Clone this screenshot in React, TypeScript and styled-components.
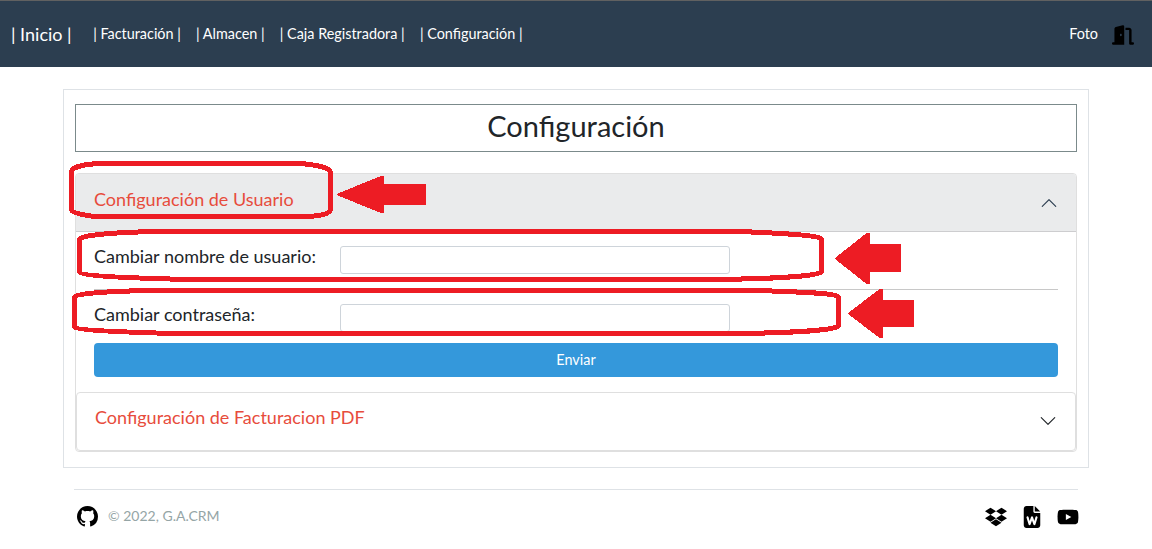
import React from 'react';
import styled, { createGlobalStyle } from 'styled-components';
import { FaDoorOpen, FaDropbox, FaFileWord, FaYoutube } from 'react-icons/fa6';
import { BsGithub } from 'react-icons/bs';

const GlobalStyle = createGlobalStyle`
  *, *::before, *::after { box-sizing: border-box; }
  body {
    margin: 0;
    background: #fff;
    color: #212529;
    font: 400 15px/22.5px Lato, "Liberation Sans", sans-serif;
  }
`;

const Page = styled.div`
  position: relative;
  height: 549px;
  overflow: hidden;
`;

const Navbar = styled.header`
  display: flex;
  align-items: center;
  height: 67px;
  padding: 1px 18px 0 11px;
  border-top: 1px solid #616161;
  background: #2c3e50;
  color: #fff;
`;

const Brand = styled.a`
  margin-right: 21.5px;
  font-size: 18px;
  white-space: nowrap;
`;

const NavLinks = styled.nav`
  display: flex;
  flex: 1;
  gap: 15.2px;
  font-size: 14.4px;
  white-space: nowrap;
`;

const UserArea = styled.div`
  display: flex;
  align-items: center;
  gap: 14px;
  font-size: 14.4px;

  svg { color: #000; }
`;

const Panel = styled.main`
  width: 1026px;
  height: 379px;
  margin: 22px 0 0 63px;
  padding: 14px 11px;
  border: 1px solid #dee2e6;
`;

const Title = styled.h1`
  height: 48px;
  margin: 0 0 21px;
  border: 1px solid #7b8a8b;
  font-size: 29px;
  font-weight: 400;
  line-height: 41px;
  text-align: center;
`;

const Accordion = styled.div`
  height: 279px;
  border: 1px solid #dfdfdf;
  border-radius: 4px;
`;

const SectionHeader = styled.button<{ $open?: boolean }>`
  display: flex;
  align-items: center;
  justify-content: space-between;
  width: 100%;
  height: ${p => (p.$open ? 58 : 59)}px;
  padding: 0 18px;
  border: ${p => (p.$open ? '0' : '1px solid #dfdfdf')};
  border-bottom: 1px solid ${p => (p.$open ? '#cdcdcf' : '#dfdfdf')};
  border-radius: ${p => (p.$open ? '3px 3px 0 0' : '4px')};
  background: ${p => (p.$open ? '#eaebec' : '#fff')};
  color: ${p => (p.$open ? '#2c3e50' : '#212529')};
  font: inherit;
`;

const SectionName = styled.span<{ $raise: number }>`
  padding-bottom: ${p => p.$raise}px;
  color: #e74c3c;
  font-size: 18px;
`;

const Chevron = styled.svg<{ $up?: boolean }>`
  width: 18px;
  height: 18px;
  margin-bottom: ${p => (p.$up ? 0 : 1)}px;
  transform: ${p => (p.$up ? 'rotate(180deg)' : 'none')};
`;

const Form = styled.form`
  display: flex;
  flex-direction: column;
  height: 160px;
  padding: 0 18px;
`;

const Field = styled.label<{ $divided?: boolean }>`
  display: grid;
  grid-template-columns: 246px 390px;
  align-items: start;
  height: ${p => (p.$divided ? 58 : 53)}px;
  padding-top: 14px;
  border-bottom: ${p => (p.$divided ? '1px solid #c8c8c8' : '0')};
  font-size: 18px;
  line-height: 20.5px;
`;

const Input = styled.input`
  height: 28px;
  border: 1px solid #ced4da;
  border-radius: 3px;
  background: #fff;
`;

const Submit = styled.button`
  height: 34px;
  padding: 0 0 2px;
  border: 0;
  border-radius: 4px;
  background: #3498db;
  color: #fff;
  font: 14.4px Lato, "Liberation Sans", sans-serif;
`;

const Footer = styled.footer`
  display: flex;
  align-items: center;
  justify-content: space-between;
  width: 1004px;
  height: 54px;
  margin: 21px 0 0 74px;
  padding: 0 0 0 3px;
  border-top: 1px solid #dee2e6;
  color: #000;
`;

const Copyright = styled.div`
  display: flex;
  align-items: center;
  gap: 10px;

  svg { margin-bottom: 1px; }
  span { color: #95a5a6; font-size: 14px; }
`;

const Social = styled.div`
  display: flex;
  align-items: center;
  gap: 14px;
  margin-right: -0.5px;
`;

const Marks = styled.svg`
  position: absolute;
  inset: 0;
  pointer-events: none;
`;

const ArrowDown = ({ up }: { up?: boolean }) => (
  <Chevron $up={up} viewBox="0 0 16 16" fill="currentColor">
    <path fillRule="evenodd" d="M1.646 4.646a.5.5 0 0 1 .708 0L8 10.293l5.646-5.647a.5.5 0 0 1 .708.708l-6 6a.5.5 0 0 1-.708 0l-6-6a.5.5 0 0 1 0-.708z" />
  </Chevron>
);

const sections = ['Facturación', 'Almacen', 'Caja Registradora', 'Configuración'];

export default function App() {
  return (
    <Page>
      <GlobalStyle />
      <Navbar>
        <Brand>| Inicio |</Brand>
        <NavLinks>
          {sections.map(name => <a key={name}>| {name} |</a>)}
        </NavLinks>
        <UserArea>
          <span>Foto</span>
          <FaDoorOpen size={22} />
        </UserArea>
      </Navbar>
      <Panel>
        <Title>Configuración</Title>
        <Accordion>
          <SectionHeader $open>
            <SectionName $raise={7}>Configuración de Usuario</SectionName>
            <ArrowDown up />
          </SectionHeader>
          <Form>
            <Field $divided>Cambiar nombre de usuario:<Input /></Field>
            <Field>Cambiar contraseña:<Input type="password" /></Field>
            <Submit type="button">Enviar</Submit>
          </Form>
          <SectionHeader>
            <SectionName $raise={9}>Configuración de Facturacion PDF</SectionName>
            <ArrowDown />
          </SectionHeader>
        </Accordion>
      </Panel>
      <Footer>
        <Copyright>
          <BsGithub size={21} />
          <span>© 2022, G.A.CRM</span>
        </Copyright>
        <Social>
          <FaDropbox size={22} />
          <FaFileWord size={22} />
          <FaYoutube size={22} />
        </Social>
      </Footer>
      <Marks width="1152" height="549" viewBox="0 0 1152 549">
        <g fill="none" stroke="#ed1c24" strokeWidth="5" strokeLinejoin="round" shapeRendering="crispEdges">
          <path d="M101 163.500H301C315 165 329 167 330.500 172V210C329 214 319 216 307 216.500H95C83 215 73 213 71.500 210V171C73 167 85 164 101 163.500Z" />
          <path d="M158 231.500H740C775 233 819 235 821.500 239V272C820 276 770 279 710 279.500H187C130 278 81 276 79.500 272V239C81 235 120 232 158 231.500Z" />
          <path d="M153 290.500H757C800 292 836 293 838.500 297V326C837 330 790 333 735 333.500H173C120 332 76 330 74.500 327V297C77 293 115 291 153 290.500Z" />
        </g>
        <g fill="#ed1c24" stroke="#ed1c24" strokeWidth="2" strokeLinejoin="round" shapeRendering="crispEdges">
          <path d="M338 194.500L381 177H383V185H425V204H383V212H381Z" />
          <path d="M836 258.500L867 234H869V245H900V271H869V283H867Z" />
          <path d="M849 313.500L880 290H882V301H913V326H882V337H880Z" />
        </g>
      </Marks>
    </Page>
  );
}
